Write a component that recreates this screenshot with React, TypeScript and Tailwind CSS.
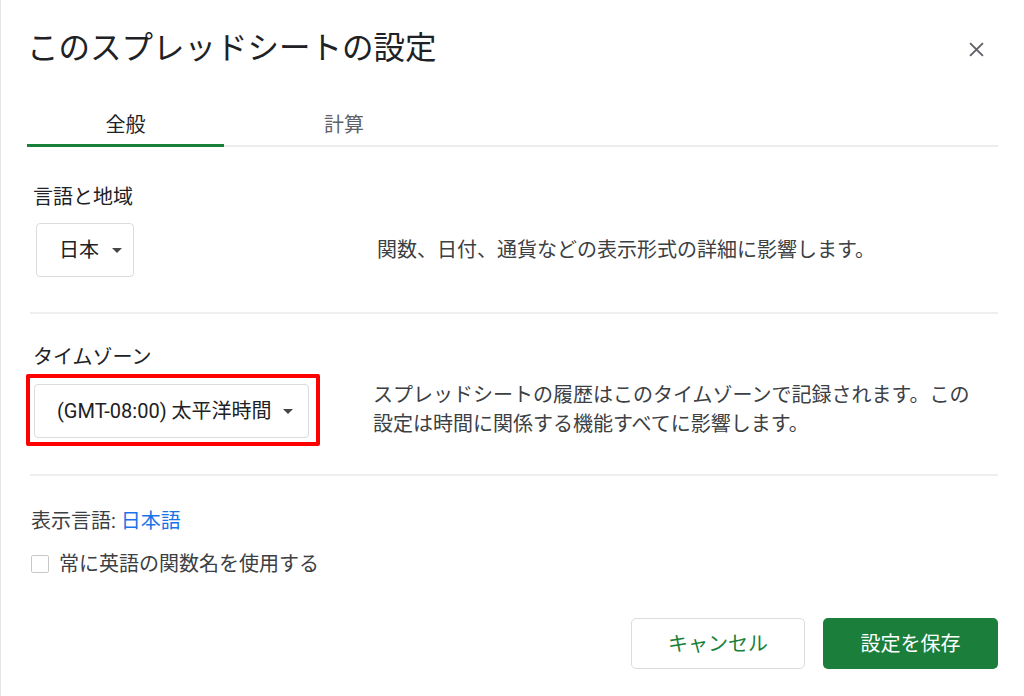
import React from 'react'

const FONT = 'Roboto, "Noto Sans CJK JP", "Noto Sans", sans-serif'

function Caret() {
  return (
    <svg width="10" height="5" viewBox="0 0 10 5" className="shrink-0">
      <path d="M0 0h10L5 5z" fill="#444746" />
    </svg>
  )
}

function Dropdown({ label, className }: { label: string; className: string }) {
  return (
    <div
      className={`flex items-center justify-between h-[54px] rounded-[4px] border border-[#dadce0] bg-white pl-[22px] text-[20px] text-[#202124] ${className}`}
    >
      <span>{label}</span>
      <Caret />
    </div>
  )
}

export default function App() {
  return (
    <div
      className="relative w-[1024px] h-[696px] bg-white border-l border-[#e6e6e6] overflow-hidden"
      style={{ fontFamily: FONT }}
    >
      {/* header */}
      <div className="flex items-center justify-between h-[44px] mt-[27px] pl-[26px] pr-[40px]">
        <h1 className="text-[31.5px] leading-none font-normal text-[#202124]">
          このスプレッドシートの設定
        </h1>
        <svg width="15" height="15" viewBox="0 0 14 14">
          <path d="M1 1l12 12M13 1L1 13" stroke="#5f6368" strokeWidth="1.8" fill="none" />
        </svg>
      </div>

      <div className="px-[26px]">
        {/* tabs */}
        <div className="flex mt-[32px] border-b-2 border-[#ececec]">
          <div className="w-[197px] h-[44px] -mb-[2px] pt-[3px] flex items-center justify-center border-b-[3px] border-[#188038] text-[20px] text-[#202124]">
            全般
          </div>
          <div className="w-[240px] h-[44px] -mb-[2px] pt-[3px] flex items-center justify-center border-b-[3px] border-transparent text-[20px] text-[#5f6368]">
            計算
          </div>
        </div>

        {/* language & region */}
        <div className="pl-[6px] pt-[36px] pb-[35px] border-b-2 border-[#efefef] ml-[3px]">
          <div className="text-[20px] leading-[28px] text-[#202124] -ml-[3px]">言語と地域</div>
          <div className="flex items-center mt-[12px]">
            <div className="w-[345px] -ml-[3px] pl-[3px]">
              <Dropdown label="日本" className="w-[98px] pr-[11px]" />
            </div>
            <p className="text-[20px] leading-[29px] text-[#3c4043] -ml-[1px]">
              関数、日付、通貨などの表示形式の詳細に影響します。
            </p>
          </div>
        </div>

        {/* time zone */}
        <div className="pt-[29px] pb-[28px] border-b-2 border-[#efefef] ml-[3px]">
          <div className="text-[20px] leading-[28px] text-[#202124] pl-[3px]">タイムゾーン</div>
          <div className="flex items-center mt-[3px]">
            <div className="w-[348px] -ml-[4px]">
              <div className="w-[294px] border-4 border-[#ff0000] rounded-[2px] pl-[4px] pr-[7px] pt-[6px] pb-[4px]">
                <Dropdown label="(GMT-08:00) 太平洋時間" className="w-[275px] pr-[15px]" />
              </div>
            </div>
            <p className="w-[620px] text-[20px] leading-[29px] text-[#3c4043] -ml-[1px]">
              スプレッドシートの履歴はこのタイムゾーンで記録されます。この
              <br />
              設定は時間に関係する機能すべてに影響します。
            </p>
          </div>
        </div>

        {/* display language */}
        <div className="pt-[31px] pl-[4px]">
          <div className="text-[20px] leading-[28px] text-[#3c4043]">
            表示言語: <span className="text-[#1a73e8]">日本語</span>
          </div>
          <label className="flex items-center mt-[15px] h-[28px]">
            <span className="w-[18px] h-[18px] rounded-[2px] border-[1.5px] border-[#c8c8c8] bg-white" />
            <span className="ml-[10px] text-[20px] leading-[28px] text-[#3c4043]">
              常に英語の関数名を使用する
            </span>
          </label>
        </div>

        {/* footer */}
        <div className="flex justify-end gap-[18px] mt-[40px]">
          <button className="w-[174px] h-[51px] rounded-[5px] border border-[#dadce0] bg-white text-[20px] text-[#188038]">
            キャンセル
          </button>
          <button className="w-[175px] h-[51px] rounded-[5px] bg-[#1b7f3b] text-[20px] text-white">
            設定を保存
          </button>
        </div>
      </div>
    </div>
  )
}
